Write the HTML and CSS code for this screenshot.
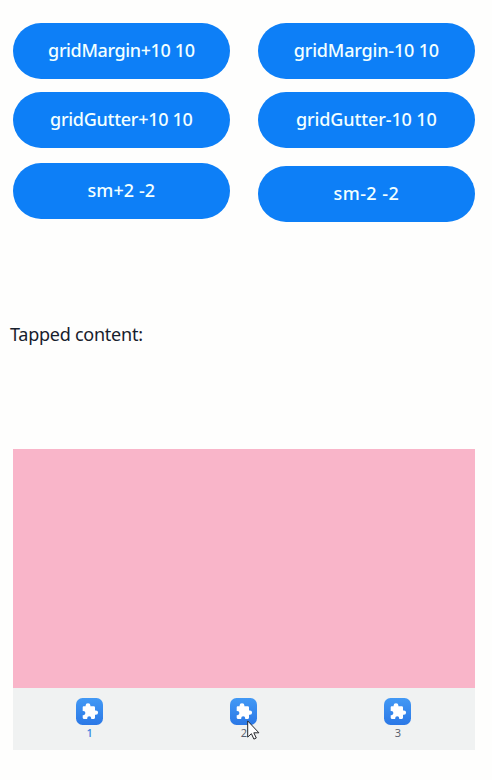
FILE: index.html
```
<!DOCTYPE html>
<html lang="en">
<head>
<meta charset="utf-8">
<title>Grid settings</title>
<link rel="stylesheet" href="styles.css">
</head>
<body>
<svg class="defs" width="0" height="0" aria-hidden="true">
  <defs>
    <linearGradient id="tile" x1="0" y1="0" x2="0" y2="1"><stop offset="0" stop-color="#4299f5"/><stop offset="1" stop-color="#2b78e6"/></linearGradient>
    <symbol id="puzzle" viewBox="0 0 27 27">
      <rect width="27" height="27" rx="6.5" fill="url(#tile)"/>
      <path fill="#fff" d="M7.6 8.3H9.6V7.6a2.4 2.4 0 0 1 4.8 0v.7h3.4q1.2 0 1.2 1.2v2.9h.9a2.2 2.2 0 0 1 0 4.4H19v3q0 1.1-1.1 1.1h-2.7v-.6a2 2 0 0 0-4 0v.6H7.8q-1.1 0-1.1-1.1v-2.6h.6a2.1 2.1 0 0 0 0-4.2h-.6V9.3q0-1 .9-1z"/>
    </symbol>
  </defs>
</svg>
<main class="page">
  <section class="controls">
    <div class="row"><button class="btn"><span class="margin-plus">gridMargin+10 10</span></button><button class="btn"><span class="margin-minus">gridMargin-10 10</span></button></div>
    <div class="row"><button class="btn"><span class="gutter-plus">gridGutter+10 10</span></button><button class="btn"><span class="gutter-minus">gridGutter-10 10</span></button></div>
    <div class="row row-last"><button class="btn"><span class="sm-plus">sm+2 -2</span></button><button class="btn btn-lower"><span class="sm-minus">sm-2 -2</span></button></div>
  </section>
  <p class="status">Tapped content:</p>
  <section class="panel">
    <div class="content"></div>
    <nav class="tabs">
      <div class="tab active"><svg class="icon"><use href="#puzzle"/></svg><span>1</span></div>
      <div class="tab"><svg class="icon"><use href="#puzzle"/></svg><span>2</span>
        <svg class="cursor" viewBox="0 0 13 20"><path d="M.7.9v16.2l3.7-3.4 2.5 5.4 2.4-1.1-2.5-5.2h5.1z" fill="#fff" stroke="#26272b" stroke-width="1"/></svg>
      </div>
      <div class="tab"><svg class="icon"><use href="#puzzle"/></svg><span>3</span></div>
    </nav>
  </section>
</main>
</body>
</html>
```
FILE: styles.css
```
* { box-sizing: border-box; }
body { margin: 0; background: #fefefd; font-family: "Noto Sans", sans-serif; }
.defs { display: block; }
.page { width: 492px; height: 780px; padding: 23px 17px 0 12.7px; overflow: hidden; }
.controls { display: flex; flex-direction: column; gap: 13.2px; height: 199px; }
.row { display: flex; justify-content: space-between; align-items: flex-start; }
.row-last { margin-top: 2px; }
.btn { width: 217.3px; height: 55.8px; padding: 0 0 1px; border: 0; border-radius: 28px; background: #0d7ff7; color: #f2ffff; font: 500 18px/24px "Noto Sans", sans-serif; white-space: nowrap; }
.btn-lower { margin-top: 2.8px; }
.margin-plus { letter-spacing: -0.38px; }
.margin-minus { letter-spacing: -0.17px; }
.gutter-plus { letter-spacing: -0.28px; }
.gutter-minus { letter-spacing: -0.12px; }
.sm-plus { letter-spacing: 0.1px; }
.sm-minus { letter-spacing: 0.45px; }
.status { margin: 100px 0 0 -2.7px; font-size: 18px; line-height: 24px; letter-spacing: -0.25px; color: #17202c; }
.panel { width: 462.3px; margin-top: 103px; }
.content { height: 239px; background: #f9b5c9; }
.tabs { display: grid; grid-template-columns: repeat(3, 1fr); height: 62px; background: #f0f2f2; }
.tab { position: relative; display: flex; flex-direction: column; align-items: center; padding-top: 10px; font-size: 11px; line-height: 16px; color: #5b6270; }
.active { color: #3380df; font-weight: 500; }
.icon { width: 27px; height: 27px; }
.cursor { position: absolute; left: 80px; top: 32px; width: 13px; height: 20px; }
```
